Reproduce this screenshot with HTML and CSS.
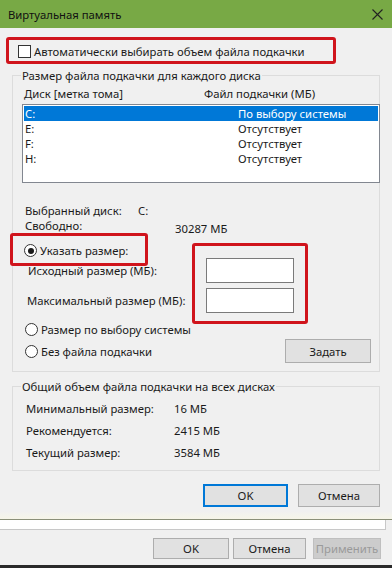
FILE: index.html
```html
<!DOCTYPE html>
<html lang="ru">
<head>
<meta charset="utf-8">
<title>Виртуальная память</title>
<link rel="stylesheet" href="styles.css">
</head>
<body>
<div class="screen">
  <div class="titlebar">
    <span class="title">Виртуальная память</span>
    <svg class="close" width="11" height="11" viewBox="0 0 11 11"><path d="M0.5 0.5L10.5 10.5M10.5 0.5L0.5 10.5" stroke="#222" stroke-width="1.1" fill="none"/></svg>
  </div>
  <div class="dialog">
    <div class="auto"><span class="chk"></span><span>Автоматически выбирать объем файла подкачки</span></div>
    <fieldset class="group g1">
      <legend>Размер файла подкачки для каждого диска</legend>
      <div class="cols"><span class="c1">Диск [метка тома]</span><span>Файл подкачки (МБ)</span></div>
      <div class="list">
        <div class="row sel"><span class="d">C:</span><span>По выбору системы</span></div>
        <div class="row"><span class="d">E:</span><span>Отсутствует</span></div>
        <div class="row"><span class="d">F:</span><span>Отсутствует</span></div>
        <div class="row"><span class="d">H:</span><span>Отсутствует</span></div>
      </div>
      <div class="info">
        <div class="irow"><span class="ilabel">Выбранный диск:</span><span class="ival1">C:</span></div>
        <div class="irow"><span class="ilabel">Свободно:</span><span class="ival2">30287 МБ</span></div>
      </div>
      <div class="radio r-custom"><span class="rb on"></span><span>Указать размер:</span></div>
      <div class="field"><span class="flabel">Исходный размер (МБ):</span><span class="input"></span></div>
      <div class="field f2"><span class="flabel">Максимальный размер (МБ):</span><span class="input"></span></div>
      <div class="radio r-sys"><span class="rb"></span><span>Размер по выбору системы</span></div>
      <div class="lastrow">
        <div class="radio"><span class="rb"></span><span>Без файла подкачки</span></div>
        <button class="btn set">Задать</button>
      </div>
    </fieldset>
    <fieldset class="group g2">
      <legend>Общий объем файла подкачки на всех дисках</legend>
      <div class="trow"><span class="tlabel">Минимальный размер:</span><span>16 МБ</span></div>
      <div class="trow"><span class="tlabel">Рекомендуется:</span><span>2415 МБ</span></div>
      <div class="trow"><span class="tlabel">Текущий размер:</span><span>3584 МБ</span></div>
    </fieldset>
    <div class="actions">
      <button class="btn ok def">OK</button>
      <button class="btn cancel">Отмена</button>
    </div>
  </div>
  <div class="under">
    <div class="strip"></div>
    <div class="uactions">
      <button class="btn ub">OK</button>
      <button class="btn ub">Отмена</button>
      <button class="btn ub dis">Применить</button>
    </div>
    <div class="taskbar"></div>
  </div>
  <div class="mark m1"></div>
  <div class="mark m2"></div>
  <div class="mark m3"></div>
</div>
</body>
</html>
```
FILE: styles.css
```css
* { box-sizing: border-box; }
html, body { margin: 0; padding: 0; }
body {
  width: 392px;
  height: 568px;
  overflow: hidden;
  background: #f0f0f0;
  font-family: "Noto Sans", "Open Sans", sans-serif;
  font-size: 11.3px;
  line-height: 15px;
  color: #1a1a1a;
}
.screen { position: relative; width: 392px; height: 568px; }

.titlebar {
  height: 28px;
  background: #78a945;
  display: flex;
  align-items: center;
  justify-content: space-between;
  padding: 0 9px 0 8px;
  color: #111;
}
.close { display: block; }

.dialog {
  padding: 16px 12px 0;
  height: 492px;
  border-bottom: 1px solid #8a8f78;
  background: #f0f0f0;
  position: relative;
}
.dialog::after {
  content: "";
  position: absolute; left: 0; right: 0; bottom: 0; height: 8px;
  background: linear-gradient(#f0f0f0, #f6f5e8);
}

.auto { display: flex; align-items: center; height: 15px; padding-left: 6px; gap: 3px; }
.chk { width: 13px; height: 13px; border: 1px solid #333; background: #fff; flex: none; }

.group {
  margin: 0;
  padding: 0;
  border: 1px solid #dcdcdc;
  min-width: 0;
}
.group legend { margin-left: 8px; padding: 0 1px; line-height: 15px; }
.g1 { margin-top: 9px; height: 304px; padding-bottom: 8px; }

.cols { display: flex; margin-top: 3px; padding-left: 11px; height: 15px; }
.cols .c1 { width: 180px; }

.list {
  margin: 3px 0 0 9px;
  width: 358px;
  height: 79px;
  border: 1px solid #828790;
  background: #fff;
  padding: 1px 0 0 1px;
}
.row { display: flex; height: 15px; }
.row .d { width: 214px; padding-left: 1px; }
.row.sel { background: #0078d7; color: #fff; margin-right: 1px; }

.info { margin-top: 20px; padding-left: 12px; }
.irow { display: flex; height: 15px; }
.ilabel { width: 113px; }
.ival2 { margin-left: 37px; margin-top: 3px; }

.radio { display: flex; align-items: center; gap: 3px; height: 15px; padding-left: 11px; }
.rb {
  width: 13px; height: 13px; border: 1px solid #333; border-radius: 50%; background: #fff; flex: none;
  position: relative;
}
.rb.on::after {
  content: ""; position: absolute; left: 2.5px; top: 2.5px; width: 6px; height: 6px; border-radius: 50%; background: #1a1a1a;
}
.r-custom { margin-top: 10px; }

.field { display: flex; align-items: center; height: 25px; padding-left: 15px; }
.field .flabel { width: 178px; }
.input { width: 88px; height: 25px; border: 1px solid #7a7a7a; background: #fff; }
.f2 { margin-top: 5px; padding-left: 14px; }
.f2 .flabel { width: 179px; }
.r-sys { margin-top: 9px; padding-left: 12px; }
.lastrow { display: flex; align-items: center; justify-content: space-between; height: 24px; margin-top: 2px; padding-right: 8px; }
.lastrow .radio { padding-left: 12px; }

.btn {
  font-family: inherit; font-size: 11.3px; color: #1a1a1a;
  background: #e1e1e1; border: 1px solid #adadad; padding: 0; margin: 0;
}
.set { width: 86px; height: 24px; }

.g2 { margin-top: 7px; height: 92px; padding-top: 3px; }
.trow { display: flex; align-items: center; height: 22px; padding-left: 13px; }
.trow .tlabel { width: 148px; }

.actions { display: flex; justify-content: flex-end; gap: 10px; margin-top: 13px; }
.ok { width: 85px; height: 23px; }
.def { border: 2px solid #0078d7; }
.cancel { width: 82px; height: 23px; }

.under { height: 48px; }
.strip { height: 10px; width: 386px; background: #fff; border-bottom: 1px solid #c8c8c8; border-right: 1px solid #c8c8c8; }
.uactions { display: flex; gap: 4px; padding-left: 153px; margin-top: 8px; }
.ub { width: 76px; height: 21px; }
.uactions .ub:nth-child(2) { width: 73px; }
.uactions .dis { width: 68px; margin-left: 3px; color: #9a9a9a; background: #cccccc; border-color: #bfbfbf; }
.taskbar { margin-top: 6px; height: 3px; background: #2a2a2a; }

.mark {
  position: absolute;
  border: 3px solid #d0141c;
  border-radius: 3px;
}
.m1 { left: 6px; top: 37px; width: 330px; height: 27px; }
.m2 { left: 10px; top: 233px; width: 138px; height: 33px; }
.m3 { left: 192px; top: 243px; width: 116px; height: 81px; }
```
